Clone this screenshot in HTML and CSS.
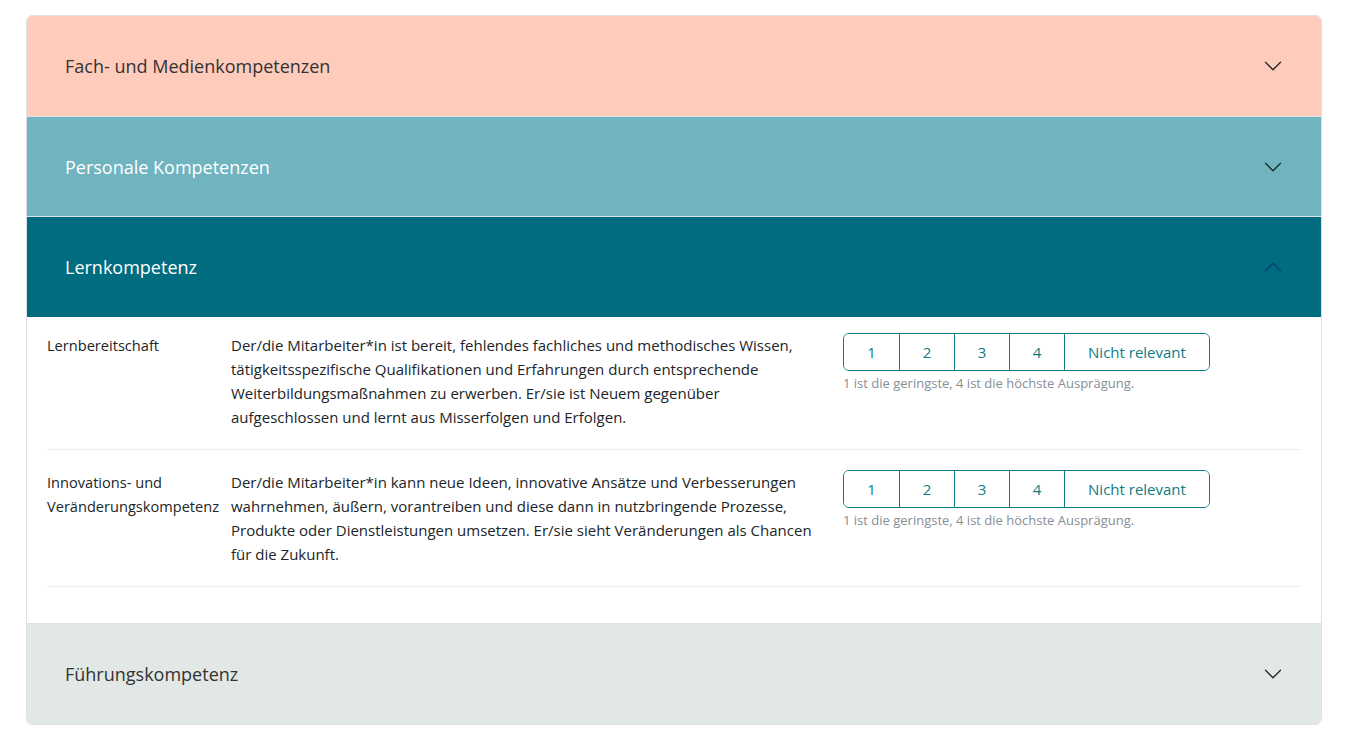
FILE: index.html
```html
<!DOCTYPE html>
<html lang="de">
<head>
<meta charset="utf-8">
<title>Kompetenzen</title>
<link rel="stylesheet" href="styles.css">
</head>
<body>
<div class="accordion">
  <div class="acc-item">
    <button class="acc-btn peach">
      <span class="acc-title">Fach- und Medienkompetenzen</span>
      <svg class="chev" viewBox="0 0 16 16"><path d="M1.646 4.646a.5.5 0 0 1 .708 0L8 10.293l5.646-5.647a.5.5 0 0 1 .708.708l-6 6a.5.5 0 0 1-.708 0l-6-6a.5.5 0 0 1 0-.708z"/></svg>
    </button>
  </div>
  <div class="acc-item">
    <button class="acc-btn teal">
      <span class="acc-title">Personale Kompetenzen</span>
      <svg class="chev" viewBox="0 0 16 16"><path d="M1.646 4.646a.5.5 0 0 1 .708 0L8 10.293l5.646-5.647a.5.5 0 0 1 .708.708l-6 6a.5.5 0 0 1-.708 0l-6-6a.5.5 0 0 1 0-.708z"/></svg>
    </button>
  </div>
  <div class="acc-item">
    <button class="acc-btn dark">
      <span class="acc-title">Lernkompetenz</span>
      <svg class="chev up" viewBox="0 0 16 16"><path d="M1.646 4.646a.5.5 0 0 1 .708 0L8 10.293l5.646-5.647a.5.5 0 0 1 .708.708l-6 6a.5.5 0 0 1-.708 0l-6-6a.5.5 0 0 1 0-.708z"/></svg>
    </button>
    <div class="acc-body">
      <div class="row">
        <div class="label">Lernbereitschaft</div>
        <div class="desc">Der/die Mitarbeiter*in ist bereit, fehlendes fachliches und methodisches Wissen,<br>tätigkeitsspezifische Qualifikationen und Erfahrungen durch entsprechende<br>Weiterbildungsmaßnahmen zu erwerben. Er/sie ist Neuem gegenüber<br>aufgeschlossen und lernt aus Misserfolgen und Erfolgen.</div>
        <div class="rating">
          <div class="btn-group">
            <button class="rb num">1</button>
            <button class="rb num">2</button>
            <button class="rb num">3</button>
            <button class="rb num">4</button>
            <button class="rb nr">Nicht relevant</button>
          </div>
          <div class="help">1 ist die geringste, 4 ist die höchste Ausprägung.</div>
        </div>
      </div>
      <div class="row">
        <div class="label">Innovations- und<br>Veränderungskompetenz</div>
        <div class="desc">Der/die Mitarbeiter*in kann neue Ideen, innovative Ansätze und Verbesserungen<br>wahrnehmen, äußern, vorantreiben und diese dann in nutzbringende Prozesse,<br>Produkte oder Dienstleistungen umsetzen. Er/sie sieht Veränderungen als Chancen<br>für die Zukunft.</div>
        <div class="rating">
          <div class="btn-group">
            <button class="rb num">1</button>
            <button class="rb num">2</button>
            <button class="rb num">3</button>
            <button class="rb num">4</button>
            <button class="rb nr">Nicht relevant</button>
          </div>
          <div class="help">1 ist die geringste, 4 ist die höchste Ausprägung.</div>
        </div>
      </div>
    </div>
  </div>
  <div class="acc-item">
    <button class="acc-btn grey">
      <span class="acc-title">Führungskompetenz</span>
      <svg class="chev" viewBox="0 0 16 16"><path d="M1.646 4.646a.5.5 0 0 1 .708 0L8 10.293l5.646-5.647a.5.5 0 0 1 .708.708l-6 6a.5.5 0 0 1-.708 0l-6-6a.5.5 0 0 1 0-.708z"/></svg>
    </button>
  </div>
</div>
</body>
</html>
```

FILE: styles.css
```css
* { box-sizing: border-box; }

body {
  margin: 0;
  background: #ffffff;
  font-family: "Open Sans", "Noto Sans", sans-serif;
  color: #212529;
}

.accordion {
  margin: 15px 0 0 26px;
  width: 1296px;
  border: 1px solid #dee2e6;
  border-radius: 6px;
  overflow: hidden;
}

.acc-item + .acc-item {
  border-top: 1px solid #dee2e6;
}

.acc-btn {
  display: flex;
  align-items: center;
  justify-content: space-between;
  width: 100%;
  height: 100px;
  padding: 0 38px;
  border: 0;
  margin: 0;
  font-family: inherit;
  font-size: 18px;
  text-align: left;
  cursor: pointer;
}

.peach { background: #ffcbbb; color: #333333; }
.teal { background: #6fb4bf; color: #ffffff; height: 99px; }
.dark { background: #006c80; color: #ffffff; }
.grey { background: #e2e8e5; color: #333333; }

.chev {
  width: 20px;
  height: 20px;
  fill: #212529;
  flex: none;
}

.chev.up {
  transform: rotate(180deg);
  fill: #0b3f6e;
}

.acc-body {
  padding: 16px 20px;
}

.row {
  display: grid;
  grid-template-columns: 184px 612px 1fr;
  padding-bottom: 20px;
  margin-bottom: 20px;
  border-bottom: 1px solid #eeeeee;
  font-size: 15px;
  line-height: 24px;
}

.label { color: #212529; font-size: 14.6px; }
.desc { color: #212529; }

.btn-group {
  display: flex;
  width: 367px;
  height: 38px;
  border: 1px solid #0e7c86;
  border-radius: 6px;
  overflow: hidden;
}

.rb {
  background: #ffffff;
  border: 0;
  margin: 0;
  padding: 0;
  font-family: inherit;
  font-size: 15px;
  color: #0e7c86;
  cursor: pointer;
}

.rb + .rb { border-left: 1px solid #0e7c86; }

.rb.num { width: 55px; }
.rb.nr { flex: 1; }

.help {
  margin-top: 3px;
  font-size: 13px;
  line-height: 18px;
  color: #868e96;
}
```
